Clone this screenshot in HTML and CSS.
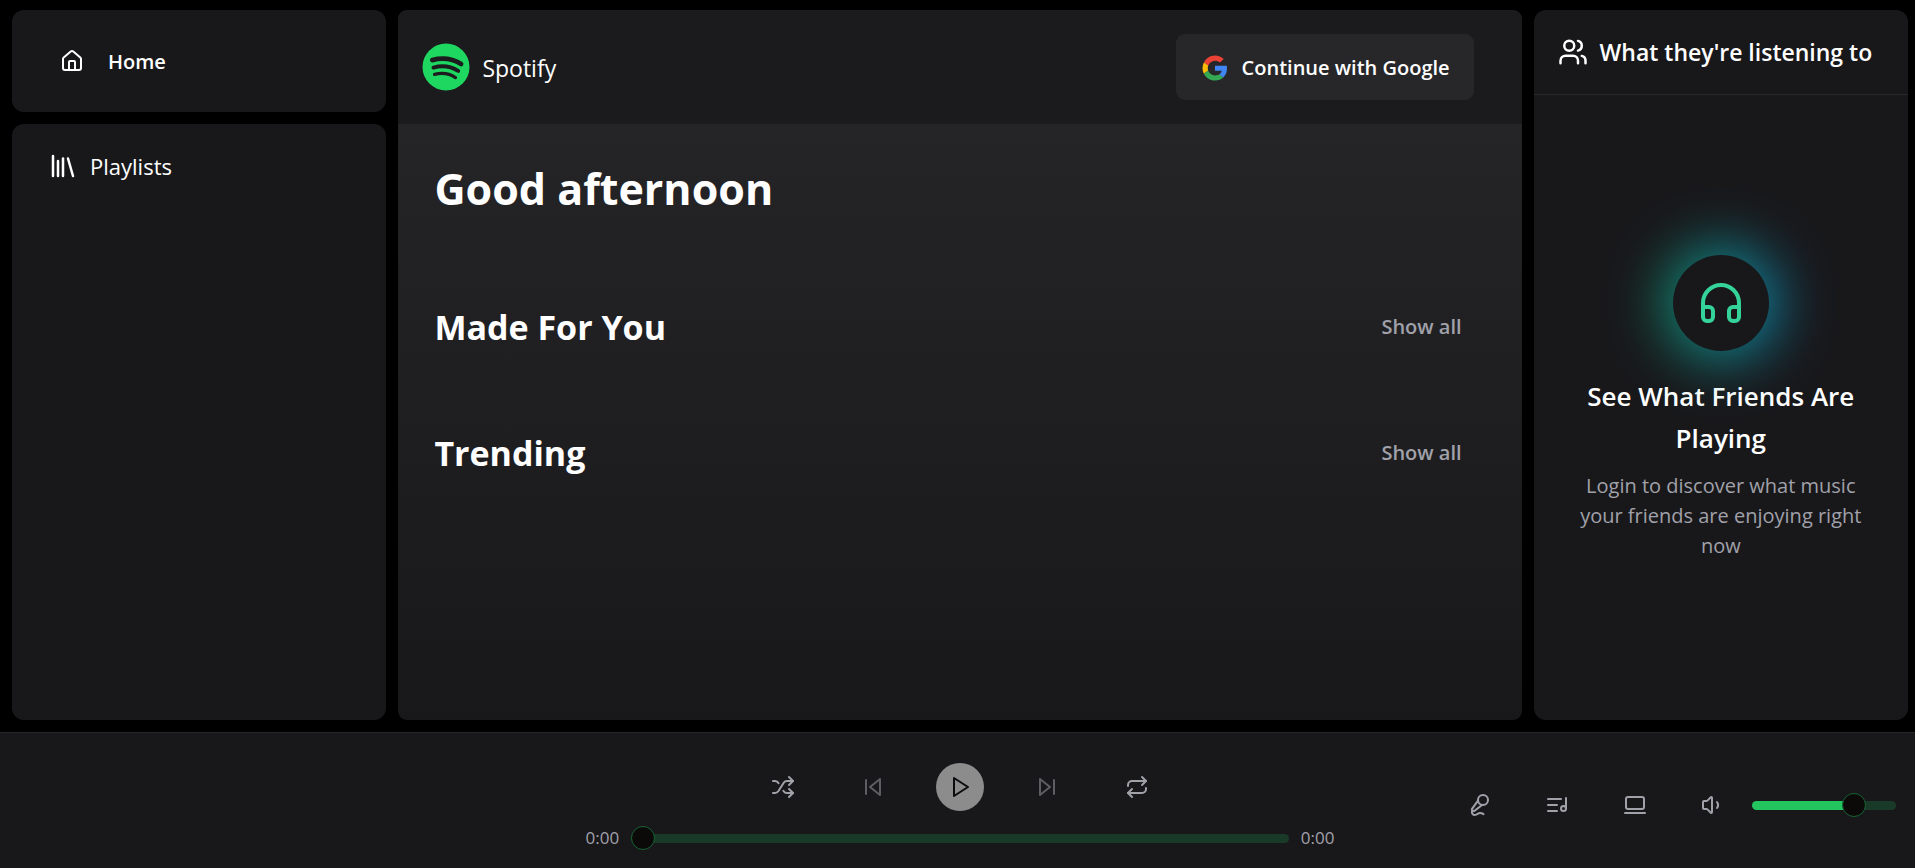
FILE: index.html
```html
<!DOCTYPE html>
<html lang="en">
<head>
	<meta charset="utf-8">
	<meta name="viewport" content="width=device-width, initial-scale=1">
	<title>Spotify</title>
	<link rel="stylesheet" href="styles.css">
</head>
<body>
	<div class="layout">

		<!-- left sidebar -->
		<aside class="sidebar">
			<nav class="card nav-card">
				<a class="nav-link" href="#">
					<svg class="icon" viewBox="0 0 24 24"><path d="M15 21v-8a1 1 0 0 0-1-1h-4a1 1 0 0 0-1 1v8"/><path d="M3 10a2 2 0 0 1 .709-1.528l7-5.999a2 2 0 0 1 2.582 0l7 5.999A2 2 0 0 1 21 10v9a2 2 0 0 1-2 2H5a2 2 0 0 1-2-2z"/></svg>
					<span>Home</span>
				</a>
			</nav>
			<section class="card library">
				<div class="library-title">
					<svg class="icon icon-lg" viewBox="0 0 24 24"><path d="m16 6 4 14"/><path d="M12 6v14"/><path d="M8 8v12"/><path d="M4 4v16"/></svg>
					<span>Playlists</span>
				</div>
			</section>
		</aside>

		<!-- main content -->
		<main class="main">
			<header class="topbar">
				<div class="brand">
					<svg class="logo" viewBox="0 0 48 48">
						<circle cx="24" cy="24" r="23.5" fill="#1ed760"/>
						<g fill="none" stroke="#1c1c1e" stroke-linecap="round">
							<path d="M10.300 17.100C20 14.600 31 15.900 39.100 21.100" stroke-width="4.700"/>
							<path d="M11.500 24.600C20 22.200 29 23.400 36.200 27.900" stroke-width="3.900"/>
							<path d="M12.500 31.400C20 29.600 27.500 30.500 33.500 34.600" stroke-width="3.200"/>
						</g>
					</svg>
					<span>Spotify</span>
				</div>
				<button class="google-btn" type="button">
					<svg class="google-icon" viewBox="0 0 48 48">
						<path fill="#ea4335" d="M24 12.200c3 0 5.800 1 8 3.100l5.900-5.900C34.200 6 29.500 4 24 4c-7.800 0-14.500 4.500-17.800 11l6.900 5.300c1.700-4.700 5.900-8.100 10.900-8.100z"/>
						<path fill="#fbbc05" d="M13 28a12.500 12.500 0 0 1 0-8l-6.800-5a20 20 0 0 0 0 18z"/>
						<path fill="#34a853" d="M24 44c5.400 0 10-1.800 13.300-4.900l-6.400-5c-1.800 1.200-4.100 1.900-6.900 1.900-5.200 0-9.400-3.400-11-8l-6.800 5C9.500 39.500 16.200 44 24 44z"/>
						<path fill="#4285f4" d="M43.200 24.500c0-1.400-.1-2.800-.4-4.100H24v7.800h10.800c-.5 2.400-1.900 4.500-3.900 5.900l6.400 5c3.800-3.500 5.900-8.600 5.900-14.600z"/>
					</svg>
					Continue with Google
				</button>
			</header>
			<div class="content">
				<h1>Good afternoon</h1>
				<section class="section-head">
					<h2>Made For You</h2>
					<button class="link-btn" type="button">Show all</button>
				</section>
				<section class="section-head">
					<h2>Trending</h2>
					<button class="link-btn" type="button">Show all</button>
				</section>
			</div>
		</main>

		<!-- friends activity -->
		<aside class="card friends">
			<div class="friends-head">
				<svg class="icon icon-lg" viewBox="0 0 24 24"><path d="M16 21v-2a4 4 0 0 0-4-4H6a4 4 0 0 0-4 4v2"/><circle cx="9" cy="7" r="4"/><path d="M22 21v-2a4 4 0 0 0-3-3.870"/><path d="M16 3.130a4 4 0 0 1 0 7.750"/></svg>
				<h2>What they're listening to</h2>
			</div>
			<div class="friends-empty">
				<div class="headphones">
					<svg class="icon" viewBox="0 0 24 24"><path d="M3 14h3a2 2 0 0 1 2 2v3a2 2 0 0 1-2 2H5a2 2 0 0 1-2-2v-7a9 9 0 0 1 18 0v7a2 2 0 0 1-2 2h-1a2 2 0 0 1-2-2v-3a2 2 0 0 1 2-2h3"/></svg>
				</div>
				<h3>See What Friends Are Playing</h3>
				<p>Login to discover what music your friends are enjoying right now</p>
			</div>
		</aside>
	</div>

	<!-- playback controls -->
	<footer class="player">
		<div class="playback">
			<div class="controls">
				<button class="icon-btn" type="button" aria-label="Shuffle">
					<svg class="icon" viewBox="0 0 24 24"><path d="m18 14 4 4-4 4"/><path d="m18 2 4 4-4 4"/><path d="M2 18h1.973a4 4 0 0 0 3.300-1.700l5.454-8.600a4 4 0 0 1 3.300-1.700H22"/><path d="M2 6h1.972a4 4 0 0 1 3.600 2.200"/><path d="M22 18h-6.041a4 4 0 0 1-3.300-1.800l-.359-.450"/></svg>
				</button>
				<button class="icon-btn" type="button" aria-label="Previous" disabled>
					<svg class="icon" viewBox="0 0 24 24"><path d="M19 20 9 12l10-8z"/><path d="M5 19V5"/></svg>
				</button>
				<button class="play-btn" type="button" aria-label="Play" disabled>
					<svg class="icon" viewBox="0 0 24 24"><path d="m6 3 14 9-14 9z"/></svg>
				</button>
				<button class="icon-btn" type="button" aria-label="Next" disabled>
					<svg class="icon" viewBox="0 0 24 24"><path d="m5 4 10 8-10 8z"/><path d="M19 5v14"/></svg>
				</button>
				<button class="icon-btn" type="button" aria-label="Repeat">
					<svg class="icon" viewBox="0 0 24 24"><path d="m17 2 4 4-4 4"/><path d="M3 11v-1a4 4 0 0 1 4-4h14"/><path d="m7 22-4-4 4-4"/><path d="M21 13v1a4 4 0 0 1-4 4H3"/></svg>
				</button>
			</div>
			<div class="progress">
				<span>0:00</span>
				<input class="slider" type="range" min="0" max="100" value="0" aria-label="Seek" style="--value: 0%">
				<span>0:00</span>
			</div>
		</div>
		<div class="extras">
			<button class="icon-btn" type="button" aria-label="Lyrics">
				<svg class="icon" viewBox="0 0 24 24"><path d="m11 7.601-5.994 8.190a1 1 0 0 0 .1 1.298l.817.818a1 1 0 0 0 1.314.087L15.090 12"/><path d="M16.500 21.174C15.500 20.500 14.372 20 13 20c-2.058 0-3.928 2.356-6 2-2.072-.356-2.775-3.369-1.500-4.500"/><circle cx="16" cy="7" r="5"/></svg>
			</button>
			<button class="icon-btn" type="button" aria-label="Queue">
				<svg class="icon" viewBox="0 0 24 24"><path d="M16 6H3"/><path d="M12 12H3"/><path d="M12 18H3"/><circle cx="18.500" cy="15.500" r="2.500"/><path d="M21 15.500V5"/></svg>
			</button>
			<button class="icon-btn" type="button" aria-label="Devices">
				<svg class="icon" viewBox="0 0 24 24"><rect width="18" height="12" x="3" y="4" rx="2"/><path d="M2 20h20"/></svg>
			</button>
			<div class="volume">
				<button class="icon-btn" type="button" aria-label="Mute">
					<svg class="icon" viewBox="0 0 24 24"><path d="M11 4.702a.705.705 0 0 0-1.203-.498L6.413 7.587A1.400 1.400 0 0 1 5.416 8H3a1 1 0 0 0-1 1v6a1 1 0 0 0 1 1h2.416a1.400 1.400 0 0 1 .997.413l3.383 3.384A.705.705 0 0 0 11 19.298z"/><path d="M16 9a5 5 0 0 1 0 6"/></svg>
				</button>
				<input class="slider" type="range" min="0" max="100" value="75" aria-label="Volume" style="--value: 75%">
			</div>
		</div>
	</footer>
</body>
</html>
```
FILE: styles.css
```css
* {
	box-sizing: border-box;
	margin: 0;
}

body {
	display: flex;
	flex-direction: column;
	height: 100vh;
	background: #000;
	color: #fff;
	font-family: "Open Sans", "Noto Sans", sans-serif;
	font-size: 20px;
	line-height: 30px;
	overflow: hidden;
}

button {
	border: 0;
	background: none;
	color: inherit;
	font: inherit;
}

.icon {
	display: block;
	flex: none;
	width: 24px;
	height: 24px;
	fill: none;
	stroke: currentColor;
	stroke-width: 2;
	stroke-linecap: round;
	stroke-linejoin: round;
}

.icon-lg {
	width: 30px;
	height: 30px;
}

/* three columns above the player */
.layout {
	flex: 1;
	min-height: 0;
	display: grid;
	grid-template-columns: 1fr 3fr 1fr;
	gap: 12px;
	padding: 10px 7px 12px 12px;
}

.card {
	background: #18181b;
	border-radius: 12px;
}

/* sidebar */
.sidebar {
	display: flex;
	flex-direction: column;
	gap: 12px;
}

.nav-card,
.library {
	padding: 24px;
}

.library {
	flex: 1;
}

.nav-link {
	display: flex;
	align-items: center;
	gap: 24px;
	height: 54px;
	padding: 0 24px;
	color: #fff;
	font-weight: 600;
	text-decoration: none;
}

.nav-link span {
	padding-top: 2px;
}

.library-title {
	display: flex;
	align-items: center;
	gap: 12px;
	padding: 0 12px;
	font-size: 22px;
	line-height: 36px;
}

/* main */
.main {
	border-radius: 9px;
	background: linear-gradient(#27272a, #18181b);
	overflow: hidden;
}

.topbar {
	display: flex;
	align-items: center;
	justify-content: space-between;
	padding: 24px 48px 24px 24px;
	background: rgba(24, 24, 27, 0.75);
}

.brand {
	display: flex;
	align-items: center;
	gap: 12px;
	font-size: 23px;
}

.brand span {
	padding-top: 2px;
}

.logo {
	width: 48px;
	height: 48px;
}

.google-btn {
	display: flex;
	align-items: center;
	gap: 12px;
	height: 66px;
	padding: 2px 24px 0;
	border-radius: 9px;
	background: #27272a;
	font-weight: 600;
}

.google-icon {
	width: 30px;
	height: 30px;
}

.content {
	padding: 38px 36px;
}

h1 {
	margin-bottom: 84px;
	font-size: 43px;
	line-height: 54px;
}

.section-head {
	display: flex;
	align-items: center;
	justify-content: space-between;
	height: 54px;
	margin-bottom: 72px;
}

.section-head h2 {
	font-size: 34px;
	line-height: 48px;
}

.link-btn {
	padding: 12px 24px;
	color: #a1a1aa;
	font-weight: 600;
}

/* friends */
.friends {
	display: flex;
	flex-direction: column;
}

.friends-head {
	display: flex;
	align-items: center;
	gap: 12px;
	padding: 24px;
	border-bottom: 1px solid #27272a;
}

.friends-head h2 {
	font-size: 23px;
	font-weight: 600;
	line-height: 36px;
	white-space: nowrap;
}

.friends-empty {
	flex: 1;
	display: flex;
	flex-direction: column;
	align-items: center;
	justify-content: center;
	padding: 0 36px;
	text-align: center;
}

.headphones {
	position: relative;
	isolation: isolate;
	display: grid;
	place-items: center;
	width: 96px;
	height: 96px;
	margin-bottom: 24px;
	border-radius: 50%;
	color: #34d399;
}

/* coloured glow behind the disc */
.headphones::before,
.headphones::after {
	content: "";
	position: absolute;
	inset: -9px;
	z-index: -2;
	border-radius: 50%;
	background: linear-gradient(to right, #10b981, #0ea5e9);
	filter: blur(28px);
	opacity: 0.75;
}

.headphones::after {
	inset: 0;
	z-index: -1;
	background: #18181b;
	filter: none;
	opacity: 1;
}

.headphones .icon {
	width: 48px;
	height: 48px;
}

.friends-empty h3 {
	margin-bottom: 12px;
	font-size: 26px;
	font-weight: 600;
	line-height: 42px;
}

.friends-empty p {
	color: #a1a1aa;
}

/* player */
.player {
	display: grid;
	grid-template-columns: 3fr 4fr 3fr;
	align-items: center;
	height: 136px;
	padding: 9px 19px 0 24px;
	border-top: 1px solid #27272a;
	background: #18181b;
	color: #a1a1aa;
}

.playback {
	grid-column: 2;
	display: flex;
	flex-direction: column;
	gap: 12px;
}

.controls {
	display: flex;
	align-items: center;
	justify-content: center;
	gap: 36px;
}

.icon-btn,
.play-btn {
	display: grid;
	place-items: center;
	width: 54px;
	height: 54px;
	padding: 0;
}

.play-btn {
	width: 48px;
	height: 48px;
	border-radius: 50%;
	background: #fff;
	color: #000;
}

button:disabled {
	opacity: 0.5;
}

.progress {
	display: flex;
	align-items: center;
	gap: 12px;
	font-size: 17px;
	line-height: 24px;
}

.extras {
	display: flex;
	align-items: center;
	justify-content: flex-end;
	gap: 24px;
}

.volume {
	display: flex;
	align-items: center;
	gap: 12px;
}

.volume .slider {
	flex: none;
	width: 144px;
}

.slider {
	flex: 1;
	min-width: 0;
	height: 24px;
	margin: 0;
	appearance: none;
	background: none;
}

.slider::-webkit-slider-runnable-track {
	height: 9px;
	border-radius: 9px;
	background: linear-gradient(to right, #22c55e var(--value), #1a3a29 var(--value));
}

.slider::-webkit-slider-thumb {
	appearance: none;
	width: 24px;
	height: 24px;
	margin-top: -8px;
	border: 1px solid #176534;
	border-radius: 50%;
	background: #0c0a09;
}
```
